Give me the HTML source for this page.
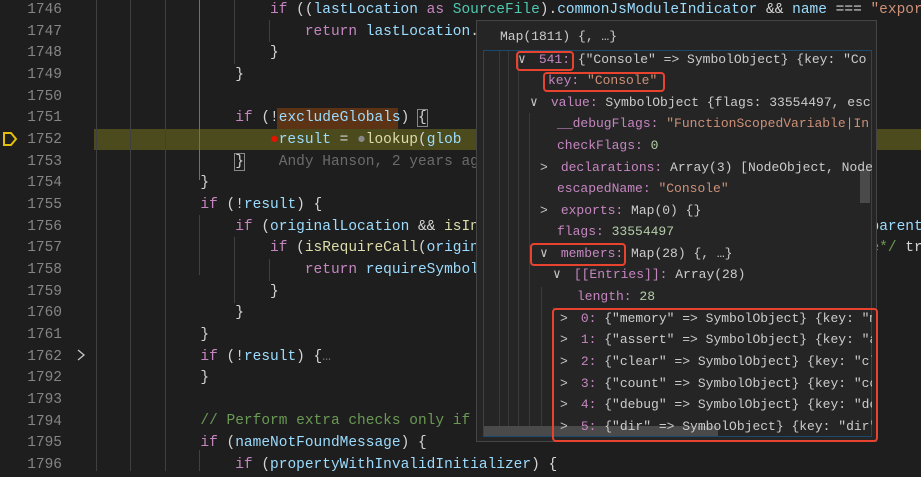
<!DOCTYPE html>
<html><head><meta charset="utf-8"><style>
body{margin:0;width:921px;height:471px;background:#1e1e1e;overflow:hidden;position:relative;font-family:"Liberation Mono","DejaVu Sans Mono",monospace;}
.ln{position:absolute;left:0;width:62px;text-align:right;color:#858585;font-size:14.5px;line-height:21.67px;}
.code{position:absolute;left:96px;font-size:14.5px;line-height:21.67px;color:#d4d4d4;}
.row{height:21.67px;white-space:pre}
.k{color:#c586c0}.v{color:#9cdcfe}.f{color:#dcdcaa}.t{color:#4ec9b0}.s{color:#ce9178}.c{color:#6a9955}.n{color:#b5cea8}.g{color:#6b6b6b}
.guide{position:absolute;width:1px;background:#404040}
#pop{position:absolute;left:476px;top:20px;width:401px;height:422px;background:#252526;border:1px solid #454545;box-sizing:border-box}
#inner{position:absolute;left:483px;top:50px;width:389px;height:387px;border:1px solid #1b4a6e;box-sizing:border-box;overflow:hidden}
.pr{position:absolute;font-size:13px;line-height:21.6px;white-space:pre;color:#cccccc}
.red{position:absolute;border:2px solid #e8432e;border-radius:4px;box-sizing:border-box}
.chev{display:inline-block;width:13px;color:#c5c5c5}
</style></head><body>
<div class="ln" style="top:0px">1746<br>1747<br>1748<br>1749<br>1750<br>1751<br>1752<br>1753<br>1754<br>1755<br>1756<br>1757<br>1758<br>1759<br>1760<br>1761<br>1762<br>1792<br>1793<br>1794<br>1795<br>1796</div>
<div style="position:absolute;left:94px;top:129px;width:827px;height:21px;background:#4b4b1e"></div>
<div style="position:absolute;left:277px;top:108px;width:121px;height:21px;background:#5c3315"></div>
<svg style="position:absolute;left:2px;top:131px" width="16" height="16"><path d="M2 2 H9 L14 8 L9 14 H2 Z" fill="none" stroke="#e2c00b" stroke-width="2"/></svg>
<svg style="position:absolute;left:75px;top:348px" width="12" height="14"><path d="M3 2 L9 7 L3 12" fill="none" stroke="#c5c5c5" stroke-width="1.3"/></svg>
<div class="guide" style="left:96px;top:0;height:471px"></div>
<div class="guide" style="left:130px;top:0;height:471px"></div>
<div class="guide" style="left:165px;top:0;height:471px"></div>
<div class="guide" style="left:199px;top:0;height:180px;background:#707070"></div>
<div class="guide" style="left:199px;top:215px;height:60px"></div>
<div class="guide" style="left:199px;top:450px;height:21px"></div>
<div class="guide" style="left:234px;top:0;height:64px"></div>
<div class="guide" style="left:234px;top:237px;height:66px"></div>
<div class="guide" style="left:269px;top:20px;height:22px"></div>
<div class="guide" style="left:269px;top:259px;height:22px"></div>
<div class="code" style="top:0px"><div class="row">                    <span class="k">if</span> ((<span class="v">lastLocation</span> <span class="k">as</span> <span class="t">SourceFile</span>).<span class="v">commonJsModuleIndicator</span> &amp;&amp; <span class="v">name</span> === <span class="s">"export</span></div><div class="row">                        <span class="k">return</span> <span class="v">lastLocation</span>.</div><div class="row">                    }</div><div class="row">                }</div><div class="row"> </div><div class="row">                <span class="k">if</span> (!<span class="v">excludeGlobals</span>) <span style="outline:1px solid #888">{</span></div><div class="row">                    <span style="color:#e51400">●</span><span class="v">result</span> = <span style="color:#888">●</span><span class="f">lookup</span>(<span class="v">glob</span></div><div class="row">                <span style="outline:1px solid #888">}</span>    <span class="g">Andy Hanson, 2 years ago • Move checker code to</span></div><div class="row">            }</div><div class="row">            <span class="k">if</span> (!<span class="v">result</span>) {</div><div class="row">                <span class="k">if</span> (<span class="v">originalLocation</span> &amp;&amp; <span class="f">isInJSFile</span>(<span class="v">originalLocation</span>) &amp;&amp; <span class="v">originalLocation</span>.<span class="v">parent</span>)</div><div class="row">                    <span class="k">if</span> (<span class="f">isRequireCall</span>(<span class="v">originalLocation</span>, <span class="c">/*checkArgumentIsStringLiteralLike*/</span> true))</div><div class="row">                        <span class="k">return</span> <span class="v">requireSymbol</span></div><div class="row">                    }</div><div class="row">                }</div><div class="row">            }</div><div class="row">            <span class="k">if</span> (!<span class="v">result</span>) {<span class="g">…</span></div><div class="row">            }</div><div class="row"> </div><div class="row">            <span class="c">// Perform extra checks only if</span></div><div class="row">            <span class="k">if</span> (<span class="v">nameNotFoundMessage</span>) {</div><div class="row">                <span class="k">if</span> (<span class="v">propertyWithInvalidInitializer</span>) {</div></div>

<div id="pop"></div>
<div class="pr" style="left:500px;top:26px;color:#cccccc">Map(1811) {, …}</div>
<div id="inner">
<div class="guide" style="left:15px;top:0;height:387px;background:#3a3a3a"></div>
<div class="guide" style="left:24px;top:0;height:387px;background:#3a3a3a"></div>
<div class="guide" style="left:34px;top:0;height:387px;background:#3a3a3a"></div>
<div class="guide" style="left:45px;top:62px;height:325px;background:#3a3a3a"></div>
<div class="guide" style="left:57px;top:236px;height:151px;background:#3a3a3a"></div>
<div class="guide" style="left:69px;top:256px;height:131px;background:#3a3a3a"></div>
<div style="position:absolute;left:376px;top:118px;width:10px;height:34px;background:#4a4a4a"></div>
<div style="position:absolute;left:0;top:375px;width:234px;height:10px;background:#4a4a4a"></div>
</div>
<div class="pr" style="left:518px;top:49px"><span class="chev">∨</span> <span class="k">541:</span> {"Console" =&gt; SymbolObject} {key: "Co</div>
<div class="pr" style="left:548px;top:70px"><span class="k">key:</span> <span class="s">"Console"</span></div>
<div class="pr" style="left:530px;top:92px"><span class="chev">∨</span> <span class="k">value:</span> SymbolObject {flags: 33554497, esc</div>
<div class="pr" style="left:557px;top:113px"><span class="k">__debugFlags:</span> <span class="s">"FunctionScopedVariable|In</span></div>
<div class="pr" style="left:557px;top:135px"><span class="k">checkFlags:</span> <span class="n">0</span></div>
<div class="pr" style="left:540px;top:157px"><span class="chev">&gt;</span> <span class="k">declarations:</span> Array(3) [NodeObject, Node</div>
<div class="pr" style="left:557px;top:178px"><span class="k">escapedName:</span> <span class="s">"Console"</span></div>
<div class="pr" style="left:540px;top:200px"><span class="chev">&gt;</span> <span class="k">exports:</span> Map(0) {}</div>
<div class="pr" style="left:557px;top:221px"><span class="k">flags:</span> <span class="n">33554497</span></div>
<div class="pr" style="left:540px;top:243px"><span class="chev">∨</span> <span class="k">members:</span> Map(28) {, …}</div>
<div class="pr" style="left:553px;top:264px"><span class="chev">∨</span> <span class="k">[[Entries]]:</span> Array(28)</div>
<div class="pr" style="left:577px;top:286px"><span class="k">length:</span> <span class="n">28</span></div>
<div class="pr" style="left:560px;top:308px"><span class="chev">&gt;</span> <span class="k">0:</span> {"memory" =&gt; SymbolObject} {key: "m</div>
<div class="pr" style="left:560px;top:329px"><span class="chev">&gt;</span> <span class="k">1:</span> {"assert" =&gt; SymbolObject} {key: "a</div>
<div class="pr" style="left:560px;top:351px"><span class="chev">&gt;</span> <span class="k">2:</span> {"clear" =&gt; SymbolObject} {key: "cl</div>
<div class="pr" style="left:560px;top:373px"><span class="chev">&gt;</span> <span class="k">3:</span> {"count" =&gt; SymbolObject} {key: "co</div>
<div class="pr" style="left:560px;top:394px"><span class="chev">&gt;</span> <span class="k">4:</span> {"debug" =&gt; SymbolObject} {key: "de</div>
<div class="pr" style="left:560px;top:416px"><span class="chev">&gt;</span> <span class="k">5:</span> {"dir" =&gt; SymbolObject} {key: "dir"</div>
<div style="position:absolute;left:872px;top:50px;width:4px;height:390px;background:#252526"></div>
<div class="red" style="left:516px;top:51px;width:58px;height:20px"></div>
<div class="red" style="left:543px;top:72px;width:122px;height:20px"></div>
<div class="red" style="left:530px;top:243px;width:96px;height:23px"></div>
<div class="red" style="left:552px;top:308px;width:326px;height:134px"></div>
</body></html>
